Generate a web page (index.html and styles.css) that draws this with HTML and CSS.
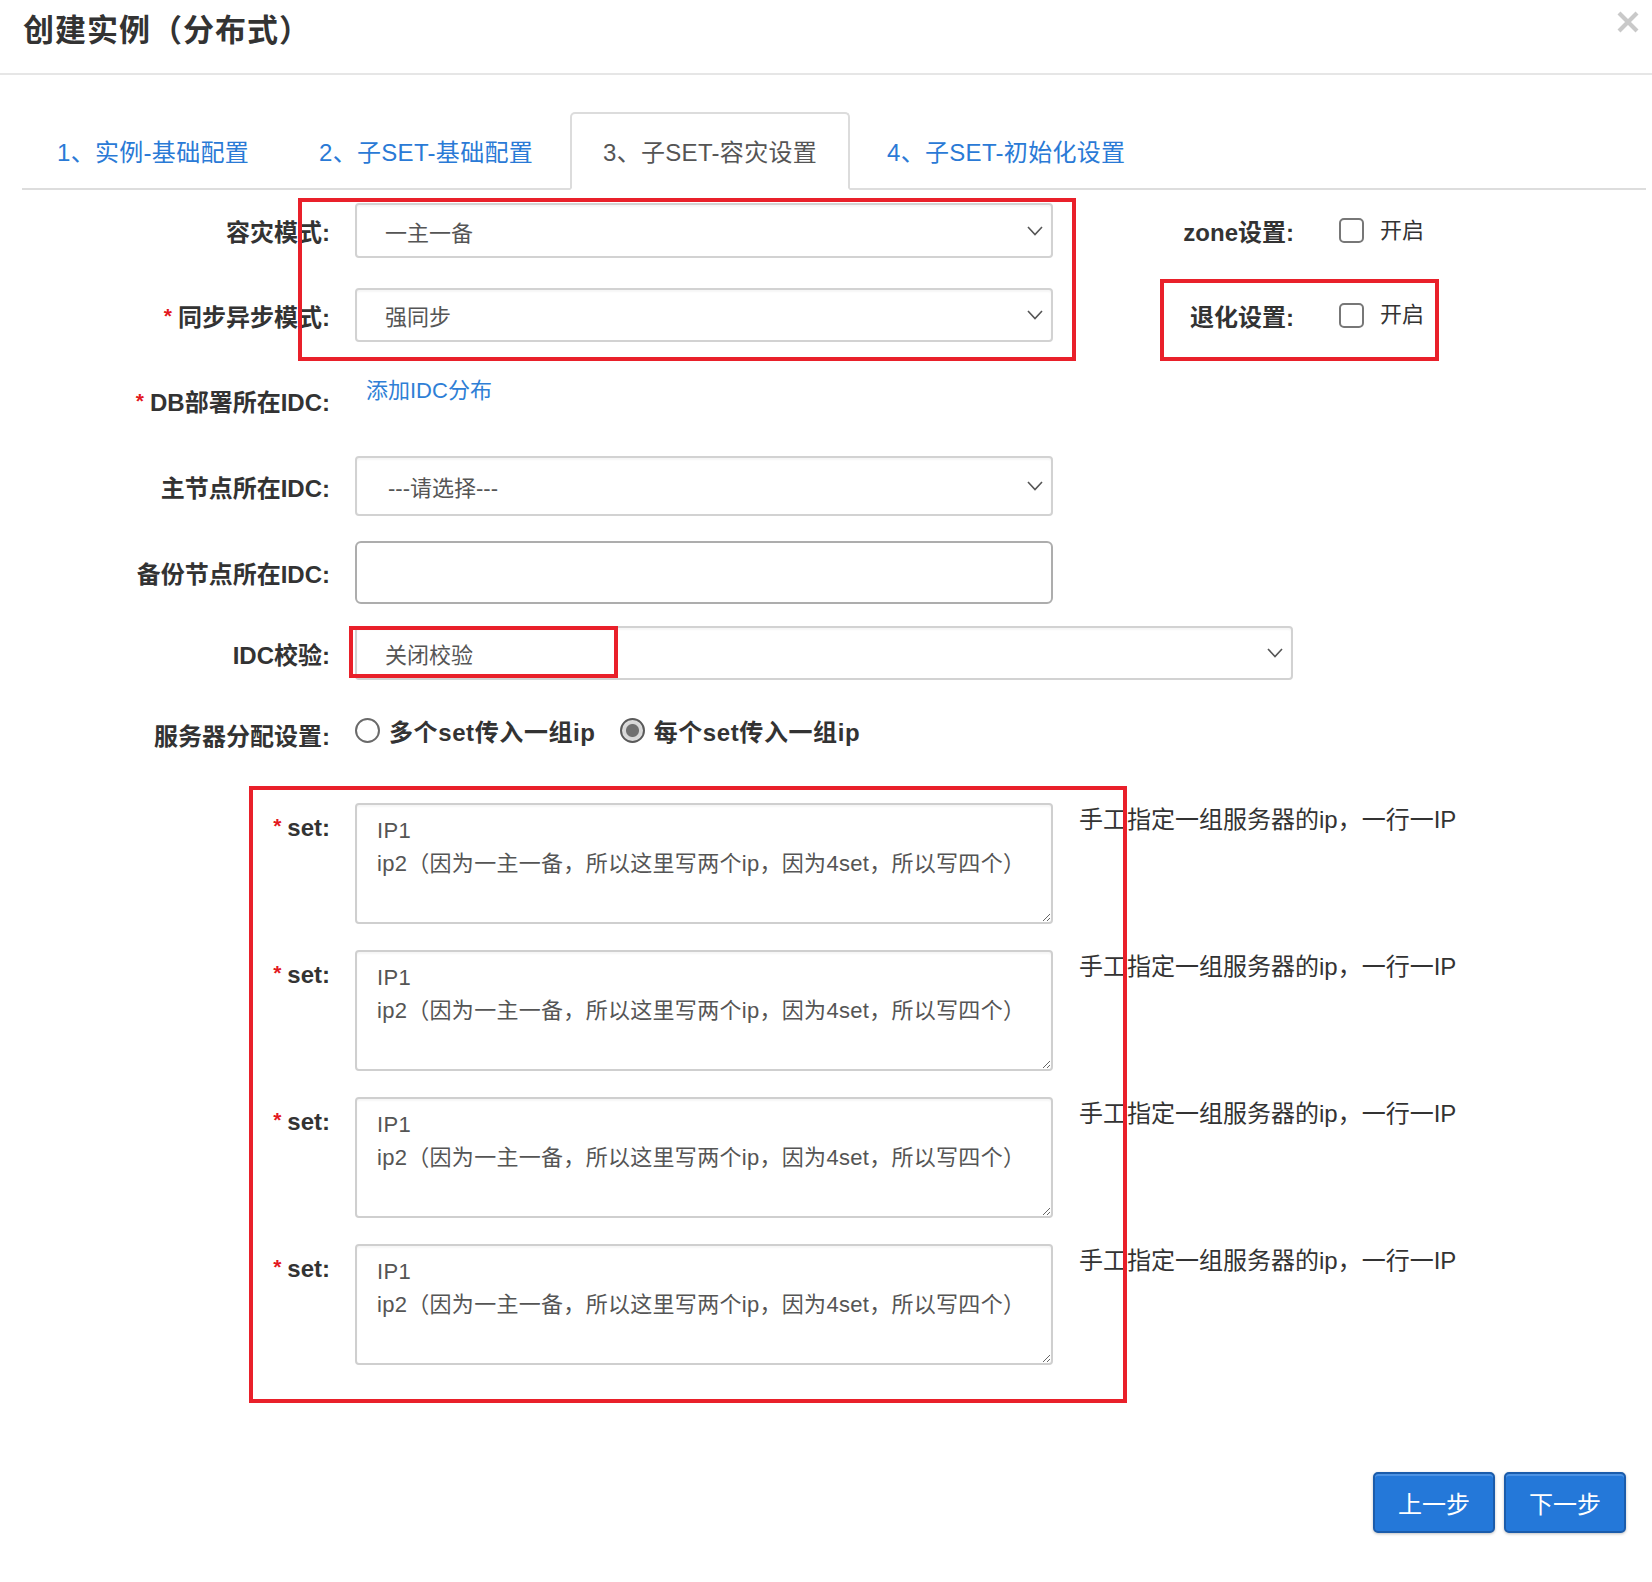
FILE: index.html
```html
<!DOCTYPE html>
<html lang="zh-CN">
<head>
<meta charset="utf-8">
<title>创建实例（分布式）</title>
<link rel="stylesheet" href="styles.css">
</head>
<body>
<div class="page">
  <header class="hd">
    <h1 class="title">创建实例（分布式）</h1>
    <button class="close" aria-label="关闭">
      <svg width="22" height="22" viewBox="0 0 22 22"><path d="M2 2 L20 20 M20 2 L2 20" stroke="#c9c9c9" stroke-width="4.2" fill="none"/></svg>
    </button>
  </header>

  <nav class="tabs">
    <a class="tab first">1、实例-基础配置</a>
    <a class="tab">2、子SET-基础配置</a>
    <a class="tab active">3、子SET-容灾设置</a>
    <a class="tab">4、子SET-初始化设置</a>
  </nav>

  <form class="form">
    <div class="row r1">
      <label class="lbl">容灾模式:</label>
      <div class="ctl select w-main"><span>一主一备</span><svg class="chev" width="16" height="10" viewBox="0 0 16 10"><path d="M1 1 L8 8.5 L15 1" fill="none" stroke="#555" stroke-width="1.6"/></svg></div>
      <div class="side">
        <label class="lbl side-lbl">zone设置:</label>
        <span class="cb"></span><span class="cb-txt">开启</span>
      </div>
    </div>

    <div class="row r2">
      <label class="lbl"><span class="req">*</span>同步异步模式:</label>
      <div class="ctl select w-main"><span>强同步</span><svg class="chev" width="16" height="10" viewBox="0 0 16 10"><path d="M1 1 L8 8.5 L15 1" fill="none" stroke="#555" stroke-width="1.6"/></svg></div>
      <div class="side">
        <label class="lbl side-lbl">退化设置:</label>
        <span class="cb"></span><span class="cb-txt">开启</span>
      </div>
    </div>

    <div class="row r3">
      <label class="lbl"><span class="req">*</span>DB部署所在IDC:</label>
      <a class="link">添加IDC分布</a>
    </div>

    <div class="row r4">
      <label class="lbl">主节点所在IDC:</label>
      <div class="ctl select w-main tall"><span>---请选择---</span><svg class="chev" width="16" height="10" viewBox="0 0 16 10"><path d="M1 1 L8 8.5 L15 1" fill="none" stroke="#555" stroke-width="1.6"/></svg></div>
    </div>

    <div class="row r5">
      <label class="lbl">备份节点所在IDC:</label>
      <div class="ctl input w-main"></div>
    </div>

    <div class="row r6">
      <label class="lbl">IDC校验:</label>
      <div class="ctl select w-wide"><span>关闭校验</span><svg class="chev" width="16" height="10" viewBox="0 0 16 10"><path d="M1 1 L8 8.5 L15 1" fill="none" stroke="#555" stroke-width="1.6"/></svg></div>
    </div>

    <div class="row r7">
      <label class="lbl">服务器分配设置:</label>
      <div class="ctl radios">
        <span class="radio"></span><span class="rtxt">多个set传入一组ip</span>
        <span class="radio on"></span><span class="rtxt">每个set传入一组ip</span>
      </div>
    </div>

    <div class="sets">
      <div class="set-row">
        <label class="lbl set-lbl"><span class="req">*</span>set:</label>
        <textarea class="ta">IP1
ip2（因为一主一备，所以这里写两个ip，因为4set，所以写四个）</textarea>
        <div class="help">手工指定一组服务器的ip，一行一IP</div>
      </div>
      <div class="set-row">
        <label class="lbl set-lbl"><span class="req">*</span>set:</label>
        <textarea class="ta">IP1
ip2（因为一主一备，所以这里写两个ip，因为4set，所以写四个）</textarea>
        <div class="help">手工指定一组服务器的ip，一行一IP</div>
      </div>
      <div class="set-row">
        <label class="lbl set-lbl"><span class="req">*</span>set:</label>
        <textarea class="ta">IP1
ip2（因为一主一备，所以这里写两个ip，因为4set，所以写四个）</textarea>
        <div class="help">手工指定一组服务器的ip，一行一IP</div>
      </div>
      <div class="set-row">
        <label class="lbl set-lbl"><span class="req">*</span>set:</label>
        <textarea class="ta">IP1
ip2（因为一主一备，所以这里写两个ip，因为4set，所以写四个）</textarea>
        <div class="help">手工指定一组服务器的ip，一行一IP</div>
      </div>
    </div>

    <div class="actions">
      <button type="button" class="btn">上一步</button>
      <button type="button" class="btn">下一步</button>
    </div>
  </form>

  <div class="mark m1"></div>
  <div class="mark m2"></div>
  <div class="mark m3"></div>
  <div class="mark m4"></div>
</div>
</body>
</html>
```

FILE: styles.css
```css
* { box-sizing: border-box; }
html, body { margin: 0; padding: 0; background: #fff; }
body {
  font-family: "Liberation Sans", "Noto Sans CJK SC", sans-serif;
  color: #333;
}
.page {
  position: relative;
  width: 1652px;
  height: 1582px;
  overflow: hidden;
  background: #fff;
}

/* header */
.hd {
  position: relative;
  height: 75px;
  border-bottom: 2px solid #e6e6e6;
  padding-left: 23px;
}
.title {
  margin: 0;
  font-family: "Noto Sans CJK SC", sans-serif;
  font-size: 31px;
  line-height: 56px;
  font-weight: 700;
  color: #333;
  letter-spacing: 1px;
}
.close {
  position: absolute;
  right: 13px;
  top: 11px;
  width: 22px;
  height: 22px;
  padding: 0;
  border: 0;
  background: none;
}
.close svg { display: block; }

/* tabs */
.tabs {
  display: flex;
  align-items: flex-start;
  margin: 37px 6px 0 22px;
  height: 78px;
  border-bottom: 2px solid #dddddd;
}
.tab {
  height: 78px;
  margin-right: 4px;
  padding: 0 31px 2px;
  border: 2px solid transparent;
  display: flex;
  align-items: center;
  font-size: 24px;
  letter-spacing: 0.3px;
  color: #2a7ad6;
  white-space: nowrap;
}
.tab.first { margin-left: 2px; }
.tab.active {
  color: #555;
  background: #fff;
  border-color: #dcdcdc #dcdcdc #fff;
  border-radius: 5px 5px 0 0;
}

/* form */
.form { padding-top: 13px; }
.row {
  display: flex;
  align-items: center;
}
.lbl {
  width: 330px;
  flex-shrink: 0;
  text-align: right;
  font-size: 24px;
  font-weight: 700;
  color: #333;
  white-space: nowrap;
}
.req {
  color: #e3191f;
  font-size: 21px;
  margin-right: 6px;
  vertical-align: 3px;
}
.ctl { margin-left: 25px; }
.w-main { width: 698px; }
.w-wide { width: 938px; }

.select {
  height: 100%;
  display: flex;
  align-items: center;
  justify-content: space-between;
  padding: 0 8px 0 28px;
  border: 2px solid #d2d2d2;
  border-radius: 4px;
  box-shadow: inset 0 2px 2px rgba(0,0,0,0.04);
  font-size: 22px;
  color: #555;
  background: #fff;
}
.select.tall { padding-left: 31px; }
.chev { flex-shrink: 0; }
.input {
  height: 100%;
  border: 2px solid #adadad;
  border-radius: 6px;
  background: #fff;
}

.r1 { height: 55px; }
.r2 { height: 54px; margin-top: 30px; }
.r3 { height: 56px; margin-top: 30px; align-items: center; }
.r4 { height: 60px; margin-top: 28px; }
.r5 { height: 63px; margin-top: 25px; }
.r6 { height: 54px; margin-top: 22px; }
.r7 { height: 56px; margin-top: 26px; }

.side {
  display: flex;
  align-items: center;
  margin-left: 26px;
}
.side-lbl { width: 215px; }
.cb {
  width: 25px;
  height: 25px;
  margin-left: 45px;
  border: 2px solid #777;
  border-radius: 5px;
  background: #fff;
}
.cb-txt {
  margin-left: 16px;
  font-size: 22px;
  color: #333;
  margin-bottom: 6px;
}

.link {
  align-self: flex-start;
  margin-left: 36px;
  font-size: 22px;
  line-height: 38px;
  color: #2f7fd6;
}

.radios {
  display: flex;
  align-items: center;
  margin-bottom: 8px;
}
.radio {
  width: 25px;
  height: 25px;
  border-radius: 50%;
  border: 2px solid #6a6a6a;
  background: #fff;
}
.radio.on {
  background: radial-gradient(circle, #707070 0, #707070 6px, #d6d6d6 7px, #e6e6e6 100%);
  border-color: #5a5a5a;
}
.rtxt {
  margin-left: 9px;
  margin-right: 24px;
  font-size: 24px;
  font-weight: 700;
  letter-spacing: 0.6px;
  color: #333;
}

/* set rows */
.sets { margin-top: 41px; }
.set-row {
  display: flex;
  align-items: flex-start;
  margin-bottom: 26px;
}
.set-row:last-child { margin-bottom: 0; }
.set-lbl { line-height: 46px; }
.ta {
  width: 698px;
  height: 121px;
  margin: 0 0 0 25px;
  padding: 9px 20px;
  border: 2px solid #cfcfcf;
  border-radius: 4px;
  box-shadow: inset 0 2px 2px rgba(0,0,0,0.04);
  font-family: "Liberation Sans", "Noto Sans CJK SC", sans-serif;
  font-size: 22px;
  line-height: 33px;
  letter-spacing: 0.3px;
  color: #555;
  background: #fff;
  outline: none;
}
.help {
  margin-left: 26px;
  font-size: 24px;
  line-height: 34px;
  color: #333;
  white-space: nowrap;
}

/* actions */
.actions {
  display: flex;
  justify-content: flex-end;
  gap: 9px;
  margin: 107px 26px 0 0;
}
.btn {
  width: 122px;
  height: 61px;
  padding: 0;
  border: 2px solid #1b5cab;
  border-radius: 5px;
  background: #2478d9;
  box-shadow: inset 0 2px 0 #4c92e3, 0 1px 3px rgba(0,0,0,0.25);
  color: #fff;
  font-family: "Liberation Sans", "Noto Sans CJK SC", sans-serif;
  font-size: 24px;
}

/* red annotation boxes drawn over the screenshot */
.mark {
  position: absolute;
  border: 4px solid #e9202a;
  pointer-events: none;
}
.m1 { left: 298px; top: 198px; width: 778px; height: 163px; }
.m2 { left: 1160px; top: 279px; width: 279px; height: 82px; }
.m3 { left: 349px; top: 626px; width: 269px; height: 52px; }
.m4 { left: 249px; top: 786px; width: 878px; height: 617px; }
```
